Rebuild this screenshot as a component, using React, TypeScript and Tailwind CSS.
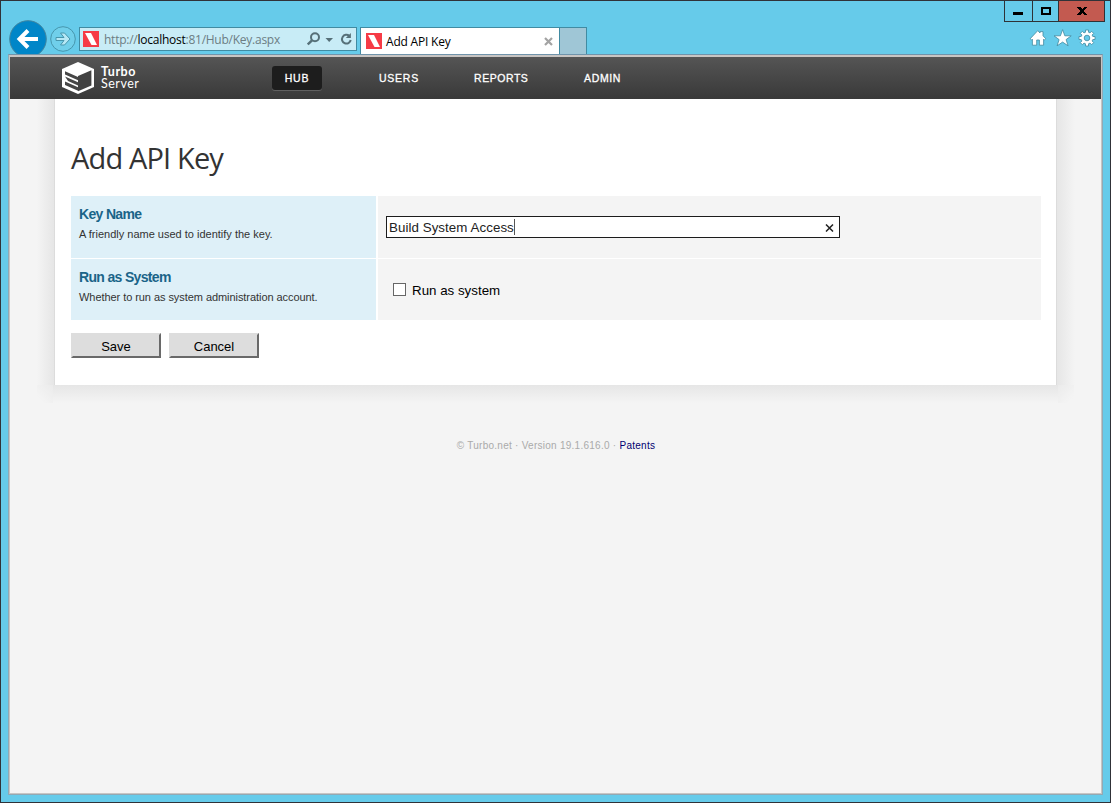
import React from 'react';

function Favicon() {
  return (
    <svg width="16" height="16" viewBox="0 0 16 16" className="shrink-0">
      <rect width="16" height="16" fill="#f63b46" />
      <path d="M2 2H8L14 14H8.5Z" fill="#fff" />
    </svg>
  );
}

function BackButton() {
  return (
    <svg width="38" height="34" viewBox="0 0 38 34" className="shrink-0">
      <circle cx="19" cy="19" r="18.3" fill="#0086c8" stroke="#41859f" />
      <path d="M29 19H11M19 10.5L10.5 19L19 27.5" fill="none" stroke="#fff" strokeWidth="4" />
    </svg>
  );
}

function ForwardButton() {
  return (
    <svg width="26" height="26" viewBox="0 0 26 26" className="mb-[2px] ml-[3px] shrink-0">
      <circle cx="13" cy="13" r="12.3" fill="#70cfea" stroke="#4796ad" />
      <path d="M6 11.5H14L10.5 7H14.5L20 13L14.5 19H10.5L14 14.5H6Z" fill="#b6e8f5" stroke="#4796ad" />
    </svg>
  );
}

function AddressBar() {
  return (
    <div className="mb-[3px] ml-[3px] flex h-6 w-[278px] shrink-0 items-center border border-[#418ba2] bg-[#c8ecf6] pl-[3px]">
      <Favicon />
      <span className="ml-[5px] w-[203px] whitespace-nowrap pt-[2px] font-['Open_Sans',sans-serif] text-[12px] leading-4 tracking-[-0.25px] text-[#6c7d83]">
        http://<span className="text-black">localhost</span>:81/Hub/Key.aspx
      </span>
      <svg width="48" height="16" viewBox="0 0 48 16" className="shrink-0" fill="none" stroke="#567078">
        <circle cx="8" cy="6.3" r="4" strokeWidth="2" />
        <path d="M5 9.3L0.8 13.5" strokeWidth="2.4" />
        <path d="M18.5 7H26L22.2 11Z" fill="#567078" stroke="none" />
        <path d="M42.3 4.9A4.4 4.4 0 1 0 43.7 9" strokeWidth="2" />
        <path d="M43.9 2V7.1H38.8Z" fill="#567078" stroke="none" />
      </svg>
    </div>
  );
}

function Tabs() {
  return (
    <div className="ml-[3px] flex h-[27px] shrink-0">
      <div className="flex w-[200px] items-center border-x border-t border-[#418ba2] bg-white pl-[5px]">
        <Favicon />
        <span className="ml-1 w-[158px] whitespace-nowrap pt-[2px] font-['Open_Sans',sans-serif] text-[12px] leading-4 tracking-[-0.2px] text-black">
          Add API Key
        </span>
        <svg width="9" height="9" viewBox="0 0 9 9" className="shrink-0">
          <path d="M1 1L8 8M8 1L1 8" stroke="#a3a3a3" strokeWidth="2.2" />
        </svg>
      </div>
      <div className="w-[27px] border-r border-t border-[#418ba2] bg-[#9fc6d6]" />
    </div>
  );
}

function WindowControls() {
  return (
    <div className="mr-[5px] flex h-[21px] shrink-0 border-b border-l border-[#2e3236]">
      <div className="flex w-[28px] items-center justify-center border-r border-[#2e3236]">
        <span className="mr-px mt-[5px] block h-[3px] w-[10px] bg-black" />
      </div>
      <div className="flex w-[26px] items-center justify-center border-r border-[#2e3236]">
        <span className="block h-2 w-[10px] border-2 border-black" />
      </div>
      <div className="flex w-[46px] items-center justify-center border-r border-[#2e3236] bg-[#c35a50]">
        <svg width="10" height="8" viewBox="0 0 10 8" shapeRendering="crispEdges">
          <path d="M0 0H3L5 2L7 0H10L6.5 4L10 8H7L5 6L3 8H0L3.5 4Z" fill="#000" />
        </svg>
      </div>
    </div>
  );
}

function ToolIcons() {
  return (
    <svg width="68" height="20" viewBox="0 0 68 20" className="mr-[13px] mt-[6px]" fill="#fff" stroke="#4089a0" strokeWidth="0.8">
      <path d="M1.2 10.7L8.8 2.6L11 5V3.6H14V7.8L16.8 10.7L15.4 12L14.6 11.2V17.2H10.4V12H7.7V17.2H3.4V11.2L2.6 12Z" />
      <path d="M33.6 1.6L35.8 7.8H42.2L37.1 11.6L39.1 17.8L33.6 14.1L28.1 17.8L30.1 11.6L25 7.8H31.4Z" />
      <g transform="translate(58 10)">
        <path d="M-1.5 -8H1.5V-5.8L3 -5.1L4.6 -6.7L6.7 -4.6L5.1 -3L5.8 -1.5H8V1.5H5.8L5.1 3L6.7 4.6L4.6 6.7L3 5.1L1.5 5.8V8H-1.5V5.8L-3 5.1L-4.6 6.7L-6.7 4.6L-5.1 3L-5.8 1.5H-8V-1.5H-5.8L-5.1 -3L-6.7 -4.6L-4.6 -6.7L-3 -5.1L-1.5 -5.8Z" />
        <circle r="2.8" fill="#66cbea" />
      </g>
    </svg>
  );
}

function Chrome() {
  return (
    <header className="flex h-[53px] shrink-0 justify-between">
      <div className="flex items-end pl-2">
        <BackButton />
        <ForwardButton />
        <AddressBar />
        <Tabs />
      </div>
      <div className="flex flex-col items-end">
        <WindowControls />
        <ToolIcons />
      </div>
    </header>
  );
}

function NavBar() {
  return (
    <nav className="flex h-[42px] shrink-0 items-center bg-linear-to-b from-[#555555] to-[#393939] pl-[52px] font-['Liberation_Sans',sans-serif] text-[10.5px] leading-4 text-white">
      <svg width="32" height="32" viewBox="0 0 32 32" className="shrink-0">
        <path d="M16 0L32 7V25L16 32L0 25V7Z" fill="#fff" />
        <path d="M16 14L29.4 8.2V23.4L16 29.2Z" fill="#424242" />
        <path d="M3 9.3L16 15V18.2L3 12.5Z M3 14.5L16 20.2V23.4L6 19Z M3 19.5L16 25.2V28.8L3 23Z" fill="#464646" />
      </svg>
      <div className="ml-[7px] w-[171px] font-['Lato',sans-serif] text-[12.5px] leading-[12px]">
        <div className="font-bold tracking-[0.5px]">Turbo</div>
        <div className="tracking-[0.5px]">Server</div>
      </div>
      <a className="flex h-6 w-[50px] items-center justify-center rounded-[3px] bg-[#1d1d1d] tracking-[0.8px] shadow-[0_1px_0_#606060] [-webkit-text-stroke:0.3px_white]">HUB</a>
      <a className="ml-[57px] w-[95px] tracking-[0.75px] [-webkit-text-stroke:0.3px_white]">USERS</a>
      <a className="w-[110px] tracking-[0.55px] [-webkit-text-stroke:0.3px_white]">REPORTS</a>
      <a className="tracking-[0.65px] [-webkit-text-stroke:0.3px_white]">ADMIN</a>
    </nav>
  );
}

function Field({ title, hint, hintTracking, height, children }: { title: string; hint: string; hintTracking: string; height: string; children: React.ReactNode }) {
  return (
    <div className={`flex gap-[2px] ${height}`}>
      <div className="w-[305px] bg-[#def0f8] px-2 pt-[9px]">
        <div className="text-[14px] font-bold leading-[18px] tracking-[-0.67px] text-[#1a6488]">{title}</div>
        <div className={`mt-[3px] whitespace-nowrap text-[11px] leading-4 text-[#333] ${hintTracking}`}>{hint}</div>
      </div>
      <div className="flex flex-1 items-center bg-[#f4f4f4] px-2">{children}</div>
    </div>
  );
}

function ActionButton({ label }: { label: string }) {
  return (
    <button className="h-[25px] w-[90px] border-2 border-b-[#696969] border-l-[#dddddd] border-r-[#696969] border-t-[#dddddd] bg-[#dddddd] pt-[3px] text-[13px] leading-[18px] text-black">
      {label}
    </button>
  );
}

function Card() {
  return (
    <main className="shrink-0">
      <div className="flex h-[286px]">
        <div className="ml-[27px] w-[17px] bg-linear-to-r from-[#f4f4f4] to-[#e6e6e6]" />
        <div className="w-[1003px] border-x border-[#dcdcdc] bg-white px-4 pt-[38px]">
          <h1 className="whitespace-nowrap font-['Open_Sans',sans-serif] text-[29px] font-normal leading-[42px] tracking-[-0.85px] text-[#333]">Add API Key</h1>
          <section className="mt-[17px] flex w-[970px] flex-col gap-px">
            <Field title="Key Name" hint="A friendly name used to identify the key." hintTracking="tracking-normal" height="h-[62px]">
              <div className="flex h-[22px] w-[454px] items-center border border-[#1c1c1c] bg-white pl-[2px] pr-[5px] text-[13.33px] leading-[18px] text-[#222]">
                <span className="pt-[2px] tracking-[0.06px]">Build System Access</span>
                <span className="-mt-px h-4 w-px bg-[#555]" />
                <svg width="9" height="8" viewBox="0 0 9 8" className="ml-auto mt-px">
                  <path d="M1 0.5L8 7.5M8 0.5L1 7.5" stroke="#222" strokeWidth="1.5" />
                </svg>
              </div>
            </Field>
            <Field title="Run as System" hint="Whether to run as system administration account." hintTracking="tracking-[-0.06px]" height="h-[61px]">
              <span className="ml-[7px] block size-[13px] border border-[#666] bg-white" />
              <span className="ml-[6px] pt-[2px] text-[13.33px] leading-5 text-black">Run as system</span>
            </Field>
          </section>
          <div className="mt-[13px] flex gap-2">
            <ActionButton label="Save" />
            <ActionButton label="Cancel" />
          </div>
        </div>
        <div className="w-[18px] bg-linear-to-r from-[#e6e6e6] to-[#f4f4f4]" />
      </div>
      <div className="mx-[27px] flex h-[18px]">
        <div className="w-4 bg-linear-to-bl from-[#ebebeb] to-[#f4f4f4] to-80%" />
        <div className="w-[1006px] bg-linear-to-b from-[#e6e6e6] to-[#f4f4f4]" />
        <div className="w-4 bg-linear-to-br from-[#ebebeb] to-[#f4f4f4] to-80%" />
      </div>
    </main>
  );
}

export default function App() {
  return (
    <div className="flex h-[803px] w-[1111px] flex-col overflow-hidden border border-[#303238] bg-[#66cbea] font-['Liberation_Sans',sans-serif]">
      <Chrome />
      <div className="ml-[7px] flex h-[741px] w-[1095px] shrink-0 flex-col border border-[#91a9b5] border-t-[#7094ab] bg-[#c8c5c3] pb-px pr-px pt-[2px]">
        <div className="ml-px flex w-[1091px] flex-1 flex-col bg-[#f4f4f4]">
          <NavBar />
          <Card />
          <footer className="mt-[35px] pl-px text-center text-[10px] leading-4 tracking-[0.26px] text-[#aaa]">
            © Turbo.net · Version 19.1.616.0 · <a className="text-[#000070]">Patents</a>
          </footer>
        </div>
      </div>
    </div>
  );
}
